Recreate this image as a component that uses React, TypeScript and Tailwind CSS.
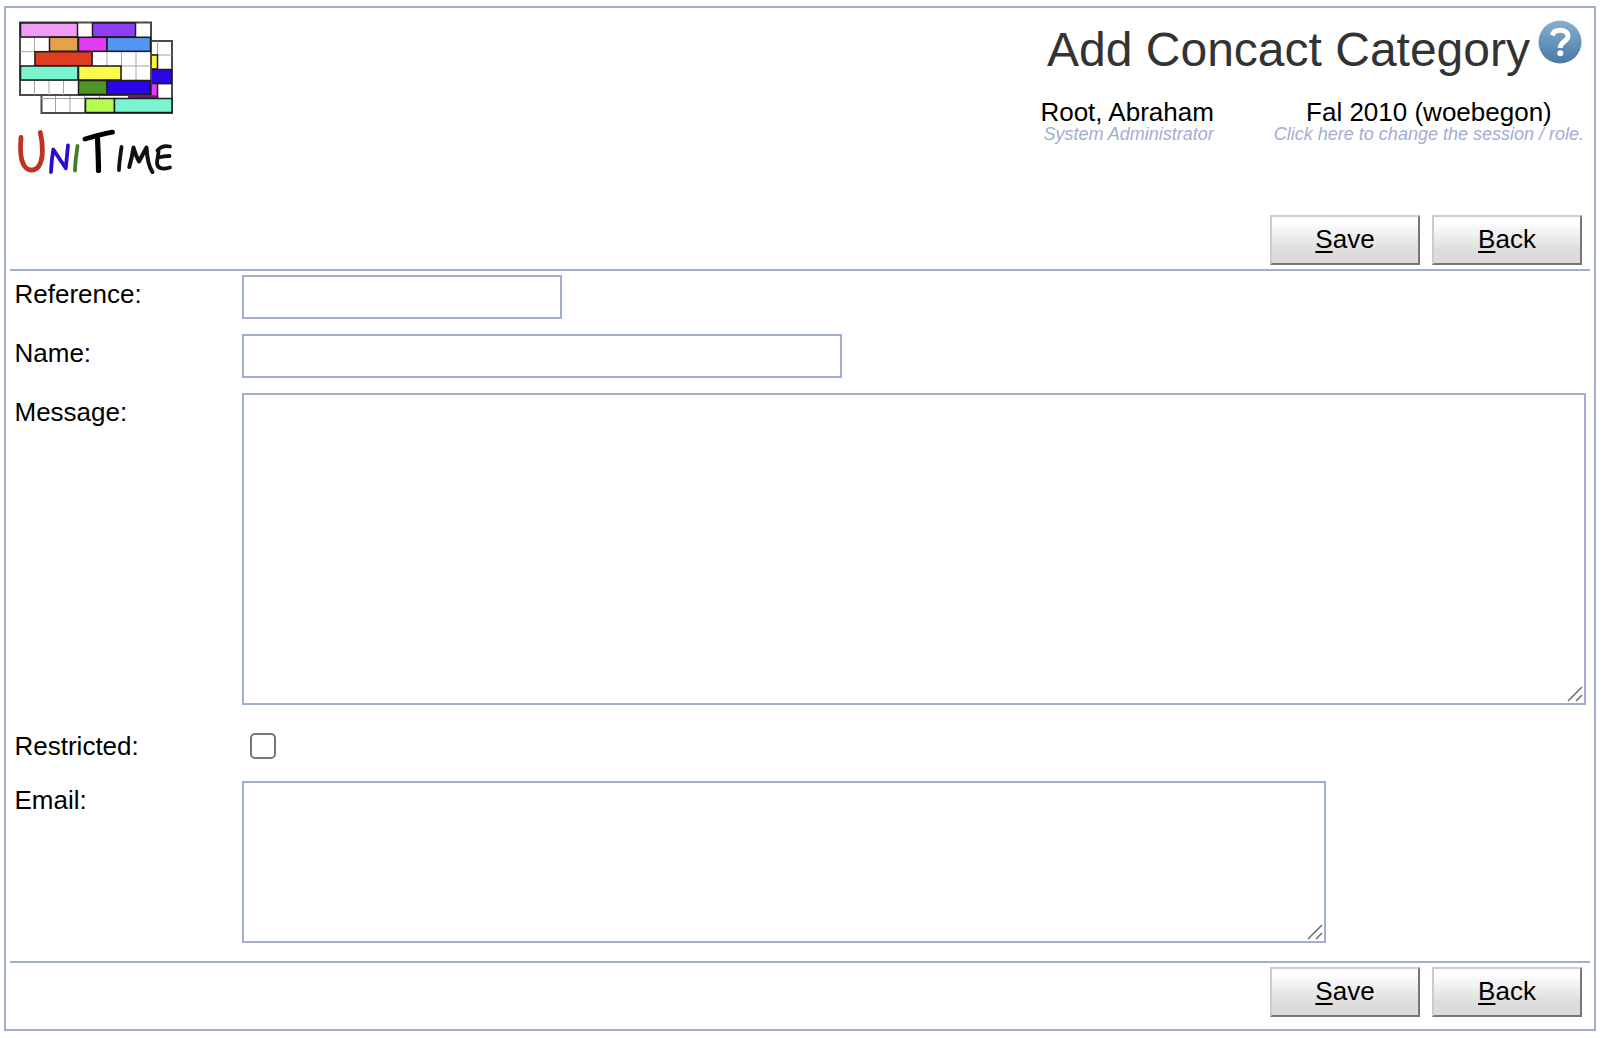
import type { ReactNode } from 'react';

type Block = [x: number, y: number, w: number, color: string];

const frontBlocks: Block[] = [
  [20.5, 23, 57, '#ee9cf5'],
  [92.5, 23, 43, '#8f3df5'],
  [49.5, 37.3, 28.5, '#e8a04c'],
  [78.5, 37.3, 28.5, '#e33cf5'],
  [107, 37.3, 43.5, '#5596f5'],
  [35, 51.7, 57, '#e03c22'],
  [20.5, 66, 57.5, '#7af5cf'],
  [78.5, 66, 42.5, '#fdfb4a'],
  [78.5, 80.5, 28.5, '#4c9526'],
  [107, 80.5, 43.5, '#2a05ea'],
];

const backBlocks: Block[] = [
  [143, 55, 14.5, '#fdf535'],
  [143, 69.5, 28.5, '#2a05ea'],
  [129, 83.5, 28.5, '#e33cf5'],
  [85.5, 98.5, 29, '#b6fb50'],
  [114.5, 98.5, 57.5, '#7af5cf'],
];

function Blocks({ items }: { items: Block[] }) {
  return (
    <>
      {items.map(([x, y, w, color]) => (
        <rect key={`${x}-${y}`} x={x} y={y} width={w} height={14} fill={color} stroke="#1c1c1c" strokeWidth={1.5} />
      ))}
    </>
  );
}

function Logo() {
  return (
    <svg className="block h-[160px] w-[160px]" viewBox="16 18 160 160" fill="none">
      <rect x="41.5" y="41" width="130.5" height="72" fill="#fff" stroke="#4a4a4a" strokeWidth="2" />
      <path d="M157.5 41V98M151 55H172M151 84H172M41 98.5H172M55.5 95V112M70 95V112M84.5 95V112M99.5 95V98" stroke="#a0a0a0" strokeWidth="1" />
      <Blocks items={backBlocks} />
      <path d="M128 96.5H157" stroke="#6b1c73" strokeWidth="2.5" />
      <rect x="20" y="22.5" width="131" height="72.5" fill="#fff" stroke="#4a4a4a" strokeWidth="2" />
      <path
        d="M34.5 37V95M49 80V95M63.5 80V95M92.5 51V66M107 51V66M121.5 51V80M136 51V80M20 37.3H151M20 51.7H151M20 66H151M20 80.5H151"
        stroke="#a8a8a8"
        strokeWidth="1"
      />
      <Blocks items={frontBlocks} />
      <g strokeLinecap="round" strokeLinejoin="round">
        <path d="M21 137.5C20.2 146 20 158 23.500 164.500C27 171.500 34.500 171.500 38.500 166.500C43.500 159.500 43.300 145 40.300 132.500" stroke="#bd3420" strokeWidth="4.8" />
        <path d="M51 172C51.3 165 52 157 53.3 149.5L65.800 168.3C66.300 162 67.300 153 68 145.5" stroke="#2c0cd0" strokeWidth="3.8" />
        <path d="M77.5 146C76.5 154 75 163 75 170.5" stroke="#3f7d27" strokeWidth="3.8" />
        <path d="M85 139C94 136.5 103 134 112.5 132.2" stroke="#000" strokeWidth="4.8" />
        <path d="M97.5 138C98 150 98.5 161 98.5 170.5" stroke="#000" strokeWidth="5.2" />
        <path d="M121.5 147C120.5 155 119 163 119 170" stroke="#111" strokeWidth="3.8" />
        <path d="M129.300 167C131 161 132.500 154 133.500 147.500C135 153 137 158 139 161.500C141.500 157 144 152 146.500 147.500C147 157 149 167 152.500 172" stroke="#111" strokeWidth="4" />
        <path d="M170 146.500C165 145.5 160.500 146.500 157.500 150.500M158.500 157.500C162 156.500 166 156 169.500 156M158.500 151C158.500 156 157 159 157 163C157.500 170 165 169 170 167.500" stroke="#111" strokeWidth="3.8" />
      </g>
    </svg>
  );
}

function HelpIcon() {
  return (
    <svg className="block h-[44px] w-[44px]" viewBox="0 0 44 44" fill="none">
      <defs>
        <linearGradient id="help-fill" x1="0" y1="0" x2="0" y2="1">
          <stop offset="0" stopColor="#86b0d0" />
          <stop offset="0.5" stopColor="#6795bb" />
          <stop offset="1" stopColor="#4c78a4" />
        </linearGradient>
      </defs>
      <circle cx="22" cy="22" r="21.5" fill="url(#help-fill)" />
      <path d="M14 15.2C15.500 11.500 18.500 10.300 22.300 10.300C27 10.300 30 12.700 30 16.300C30 21.500 22.300 21.200 22.300 28" stroke="#fff" strokeWidth="5" />
      <circle cx="22.3" cy="33.300" r="3" fill="#fff" />
    </svg>
  );
}

function ActionButton({ accessKey, rest }: { accessKey: string; rest: string }) {
  return (
    <button
      accessKey={accessKey}
      className="h-[50px] w-[150px] border-2 border-t-[#cccccc] border-r-[#777777] border-b-[#777777] border-l-[#cccccc] bg-linear-to-b from-white from-10% to-[#dcdcdc] to-75% pb-[3px] text-[26px] leading-[30px]"
    >
      <span className="underline decoration-2 underline-offset-[3px]">{accessKey}</span>
      {rest}
    </button>
  );
}

function Actions() {
  return (
    <div className="flex justify-end gap-3 pr-2">
      <ActionButton accessKey="S" rest="ave" />
      <ActionButton accessKey="B" rest="ack" />
    </div>
  );
}

function Row({ label, children, className = 'pt-1' }: { label: string; children: ReactNode; className?: string }) {
  return (
    <div className="flex items-start">
      <label className={`w-[232px] shrink-0 pl-[4.5px] text-[26px] leading-[30px] ${className}`}>{label}</label>
      {children}
    </div>
  );
}

function TextArea({ className }: { className: string }) {
  return (
    <div className={`relative ${className}`}>
      <textarea className="block h-full w-full resize-none border-2 border-[#a1aecf] bg-white p-1 text-[26px] outline-none" />
      <svg className="pointer-events-none absolute right-[3px] bottom-[3px] h-4 w-4" viewBox="0 0 16 16" fill="none">
        <path d="M1 15L15 1M9 15L15 9" stroke="#6b6b6b" strokeWidth="1.5" />
      </svg>
    </div>
  );
}

export default function App() {
  return (
    <div className="h-[1038px] w-[1602px] overflow-hidden bg-white pt-1.5 pl-1 font-['Liberation_Sans',Arial,sans-serif] text-black">
      <div className="h-[1025px] w-[1592px] border-2 border-[#a1aecf] px-1">
        <header className="flex h-[263px] flex-col justify-between border-b-2 border-[#a1aecf] pb-1">
          <div className="flex items-start justify-between pt-2.5 pl-1.5">
            <Logo />
            <div className="flex flex-col">
              <div className="flex justify-end gap-2 pr-2">
                <h1 className="pt-1 text-[48px] leading-[56px] whitespace-nowrap text-[#333333]">Add Concact Category</h1>
                <div className="pt-0.5">
                  <HelpIcon />
                </div>
              </div>
              <div className="flex justify-end gap-[60px] pt-[21px] pr-1.5 whitespace-nowrap">
                <div className="text-right">
                  <div className="text-[26px] leading-[26px]">Root, Abraham</div>
                  <div className="text-[18px] leading-[18px] text-[#a1aecf] italic">System Administrator</div>
                </div>
                <div className="text-center">
                  <div className="text-[26px] leading-[26px]">Fal 2010 (woebegon)</div>
                  <div className="text-[18px] leading-[18px] text-[#a1aecf] italic">Click here to change the session / role.</div>
                </div>
              </div>
            </div>
          </div>
          <Actions />
        </header>

        <main className="flex flex-col gap-[15px] border-b-2 border-[#a1aecf] pt-1 pb-[18px]">
          <Row label="Reference:">
            <input className="h-11 w-[320px] border-2 border-[#a1aecf] px-1 text-[26px] outline-none" />
          </Row>
          <Row label="Name:">
            <input className="h-11 w-[600px] border-2 border-[#a1aecf] px-1 text-[26px] outline-none" />
          </Row>
          <Row label="Message:">
            <TextArea className="h-[312px] w-[1344px]" />
          </Row>
          <Row label="Restricted:" className="h-[46px] pt-[11px]">
            <input type="checkbox" className="mt-[13px] ml-2 h-[26px] w-[26px] appearance-none rounded-[5px] border-2 border-[#767676] bg-white" />
          </Row>
          <Row label="Email:">
            <TextArea className="h-[162px] w-[1084px]" />
          </Row>
        </main>

        <footer className="pt-1">
          <Actions />
        </footer>
      </div>
    </div>
  );
}
